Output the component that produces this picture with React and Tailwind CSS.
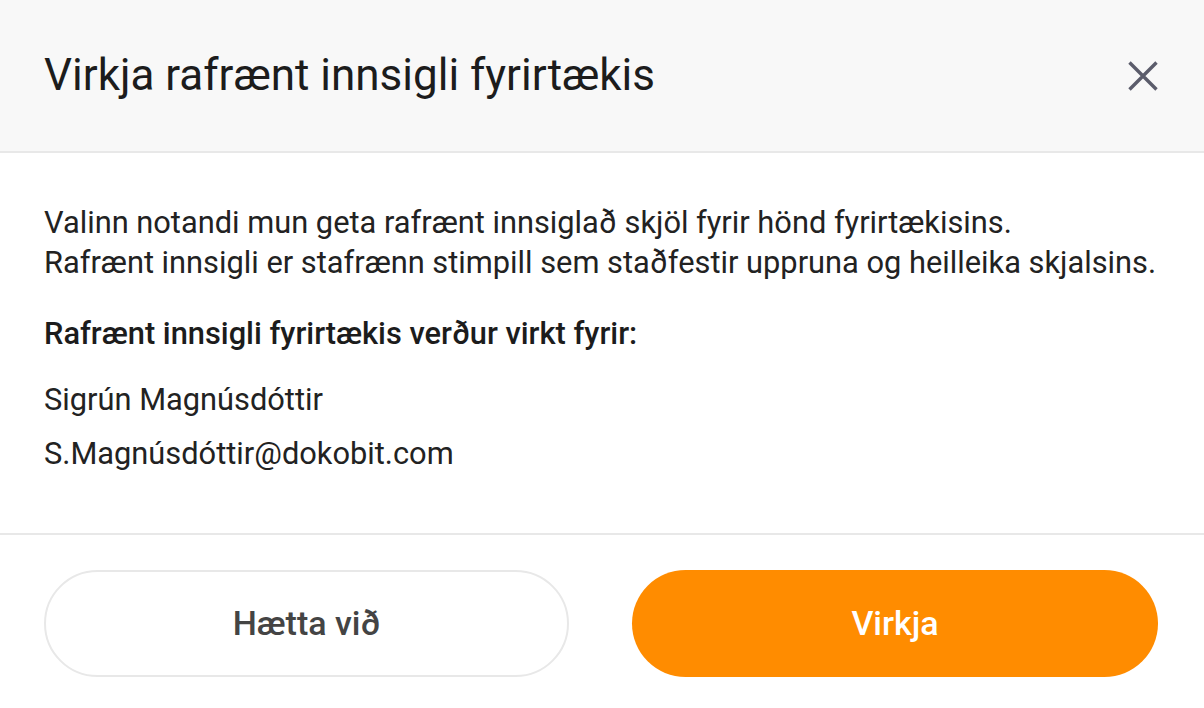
import React from 'react';

const App = () => {
  return (
    <div className="w-[1204px] h-[708px] bg-white font-['Roboto',sans-serif] text-[#222] overflow-hidden">
      <div className="h-[153px] bg-[#f8f8f8] border-b-2 border-[#e8e8e8] flex items-center justify-between pl-[44px] pr-[46px]">
        <h1 className="text-[44px] leading-[52px] font-normal text-[#1c1c1c] pb-[2px]">Virkja rafrænt innsigli fyrirtækis</h1>
        <button className="w-[30px] h-[30px] flex items-center justify-center text-[#5b5c6b]">
          <svg width="30" height="30" viewBox="0 0 30 30" fill="none" stroke="currentColor" strokeWidth="3.4" strokeLinecap="butt">
            <path d="M1.5 1.5 L28.5 28.5 M28.5 1.5 L1.5 28.5" />
          </svg>
        </button>
      </div>

      <div className="h-[382px] border-b-2 border-[#e8e8e8] pl-[44px] pr-[40px] pt-[50px] text-[30.8px] leading-[40px]">
        <p>
          Valinn notandi mun geta rafrænt innsiglað skjöl fyrir hönd fyrirtækisins.
          <br />
          Rafrænt innsigli er stafrænn stimpill sem staðfestir uppruna og heilleika skjalsins.
        </p>
        <p className="mt-[31px] font-medium text-[#1c1c1c]">Rafrænt innsigli fyrirtækis verður virkt fyrir:</p>
        <p className="mt-[26px]">Sigrún Magnúsdóttir</p>
        <p className="mt-[14px]">S.Magnúsdóttir@dokobit.com</p>
      </div>

      <div className="pl-[44px] pr-[46px] pt-[35px] flex justify-between">
        <button className="w-[525px] h-[107px] rounded-full border-2 border-[#e8e8e8] bg-white text-[34px] font-medium text-[#444]">
          Hætta við
        </button>
        <button className="w-[526px] h-[107px] rounded-full bg-[#ff8c00] text-[34px] font-medium text-white">
          Virkja
        </button>
      </div>
    </div>
  );
};

export default App;
